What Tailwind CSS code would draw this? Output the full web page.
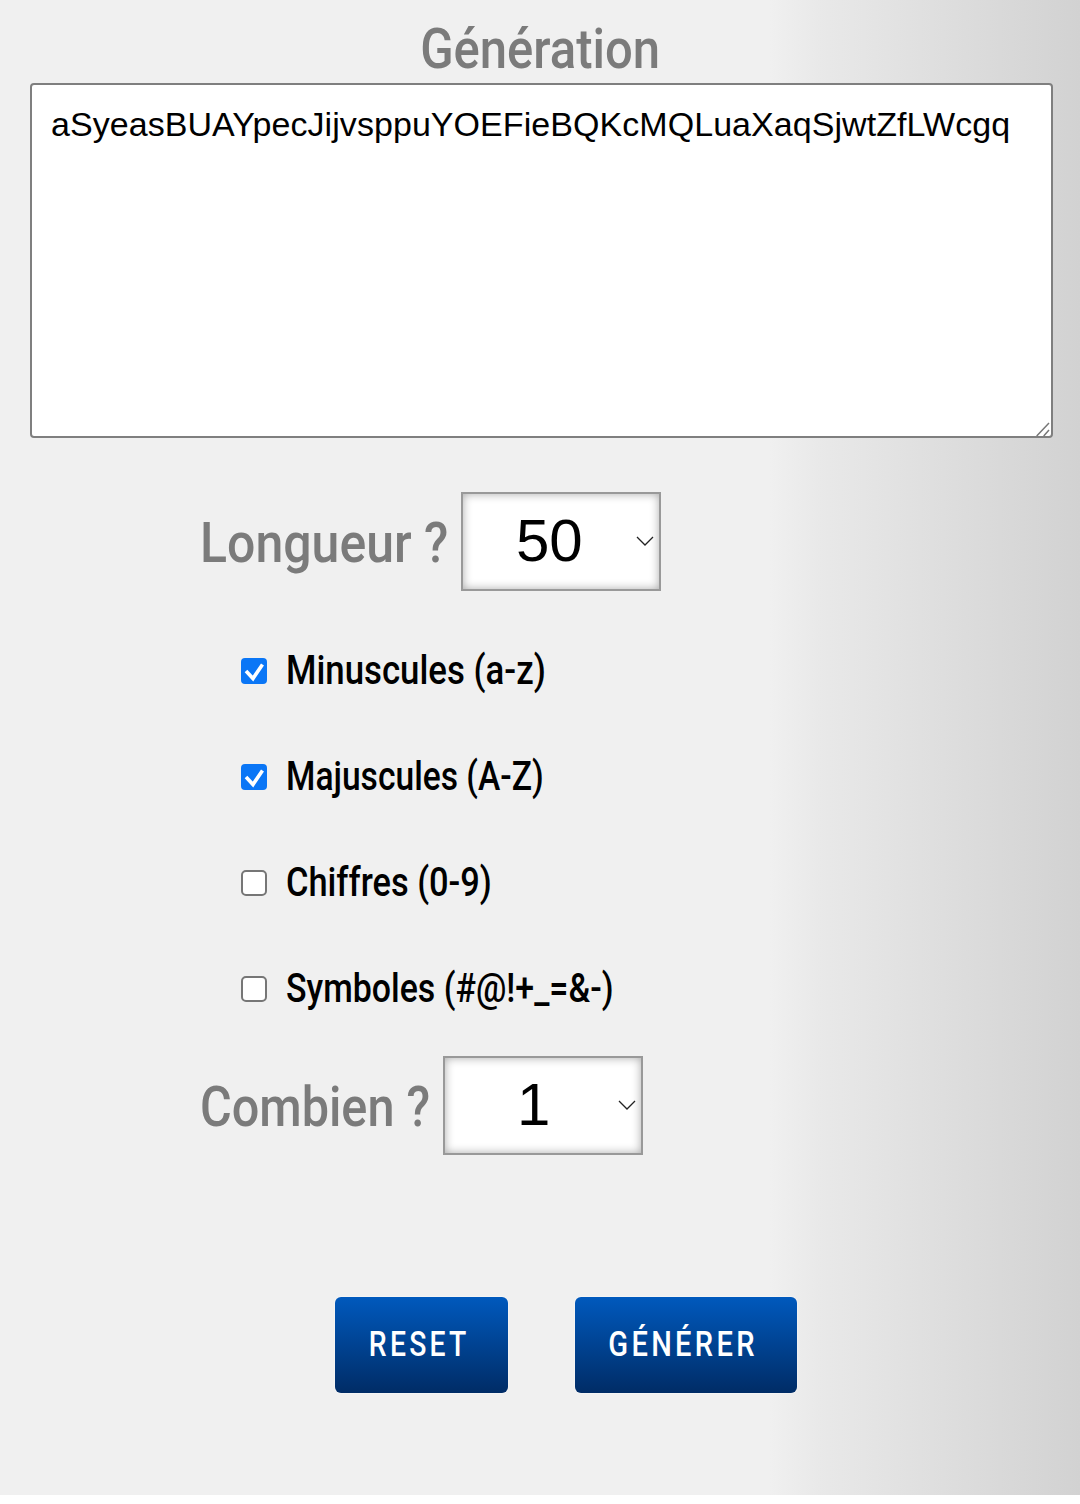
<!DOCTYPE html>
<html lang="fr"><head><meta charset="utf-8"><script src="https://cdn.jsdelivr.net/npm/@tailwindcss/browser@4"></script><title>Génération</title></head>
<body class="bg-white font-['Liberation_Sans',sans-serif]">
<main class="h-[1495px] bg-[linear-gradient(90deg,#f0f0f0_0,#f0f0f0_770px,#e9e9e9_818px,#d2d2d2_1080px)] px-[30px] flex flex-col">
<h1 class="h-[83px] flex justify-center items-center pt-[14px] text-[56px] leading-none font-['Roboto',sans-serif] font-medium text-[#7b7b7b]"><span class="inline-block scale-x-[0.875]">Génération</span></h1>
<div class="relative w-[1023px] h-[355px]">
<textarea class="block w-full h-full resize-none border-2 border-[#7f7f7f] rounded-[4px] bg-white pl-[19px] pt-[19px] text-[34px] leading-[40px] tracking-[0.06px] text-black outline-none whitespace-pre">aSyeasBUAYpecJijvsppuYOEFieBQKcMQLuaXaqSjwtZfLWcgq</textarea>
<svg class="absolute right-0 bottom-0 w-[20px] h-[20px]" viewBox="0 0 20 20" fill="none" stroke="#777" stroke-width="1.5"><path d="M3.7 18L16 5M10.7 18L16 12"/></svg>
</div>
<form class="pl-[170px] flex flex-col font-['Roboto',sans-serif] font-medium">
<div class="mt-[53px] flex items-center h-[100px]">
<label class="w-[261px] pt-[3px] text-[56px] text-[#7b7b7b] leading-none whitespace-nowrap"><span class="inline-block origin-left scale-x-[0.893]">Longueur ?</span></label>
<div class="relative w-[200px] h-[99px]"><select class="appearance-none w-full h-full border-2 border-[#999] bg-white shadow-[inset_0_0_10px_#aaa] pl-[53px] text-[60px] text-black font-['Liberation_Sans',sans-serif] font-normal outline-none"><option>50</option></select>
<svg class="absolute right-[7px] top-[44px] w-[18px] h-[10px]" viewBox="0 0 18 10" fill="none" stroke="#222" stroke-width="1.3"><path d="M1 1l8 8 8-8"/></svg></div>
</div>
<div class="mt-[60px] flex flex-col gap-[66px] pl-[41px]">
<label class="flex items-center h-[40px] text-[40px] text-black leading-none"><span class="w-[26px] h-[26px] rounded-[4px] bg-[#0a76f6]"><svg class="w-[26px] h-[26px]" viewBox="0 0 26 26" fill="none" stroke="#fff" stroke-width="3.6"><path d="M5 13l7 7.5L21.5 6.5"/></svg></span><span class="ml-[19px] inline-block whitespace-nowrap origin-left scale-x-[0.87]">Minuscules (a-z)</span></label>
<label class="flex items-center h-[40px] text-[40px] text-black leading-none"><span class="w-[26px] h-[26px] rounded-[4px] bg-[#0a76f6]"><svg class="w-[26px] h-[26px]" viewBox="0 0 26 26" fill="none" stroke="#fff" stroke-width="3.6"><path d="M5 13l7 7.5L21.5 6.5"/></svg></span><span class="ml-[19px] inline-block whitespace-nowrap origin-left scale-x-[0.84]">Majuscules (A-Z)</span></label>
<label class="flex items-center h-[40px] text-[40px] text-black leading-none"><span class="w-[26px] h-[26px] rounded-[5px] bg-white border-2 border-[#767676]"></span><span class="ml-[19px] inline-block whitespace-nowrap origin-left scale-x-[0.86]">Chiffres (0-9)</span></label>
<label class="flex items-center h-[40px] text-[40px] text-black leading-none"><span class="w-[26px] h-[26px] rounded-[5px] bg-white border-2 border-[#767676]"></span><span class="ml-[19px] inline-block whitespace-nowrap origin-left scale-x-[0.848]">Symboles (#@!+_=&amp;-)</span></label>
</div>
<div class="mt-[46px] flex items-center h-[100px]">
<label class="w-[243px] pt-[3px] text-[56px] text-[#7b7b7b] leading-none whitespace-nowrap"><span class="inline-block origin-left scale-x-[0.868]">Combien ?</span></label>
<div class="relative w-[200px] h-[99px]"><select class="appearance-none w-full h-full border-2 border-[#999] bg-white shadow-[inset_0_0_10px_#aaa] pl-[72px] text-[60px] text-black font-['Liberation_Sans',sans-serif] font-normal outline-none"><option>1</option></select>
<svg class="absolute right-[7px] top-[44px] w-[18px] h-[10px]" viewBox="0 0 18 10" fill="none" stroke="#222" stroke-width="1.3"><path d="M1 1l8 8 8-8"/></svg></div>
</div>
<div class="mt-[142px] pl-[135px] flex gap-[67px]">
<button type="button" class="w-[173px] h-[96px] rounded-[6px] bg-[linear-gradient(180deg,#0059bd,#002c66)] shadow-[0_0_2px_#fff] text-white text-[35px] font-medium tracking-[4px]"><span class="inline-block scale-x-[0.81] -translate-x-[2px]">RESET</span></button>
<button type="button" class="w-[222px] h-[96px] rounded-[6px] bg-[linear-gradient(180deg,#0059bd,#002c66)] shadow-[0_0_2px_#fff] text-white text-[35px] font-medium tracking-[4px]"><span class="inline-block scale-x-[0.83] -translate-x-[3px]">GÉNÉRER</span></button>
</div>
</form>
</main>
</body></html>
